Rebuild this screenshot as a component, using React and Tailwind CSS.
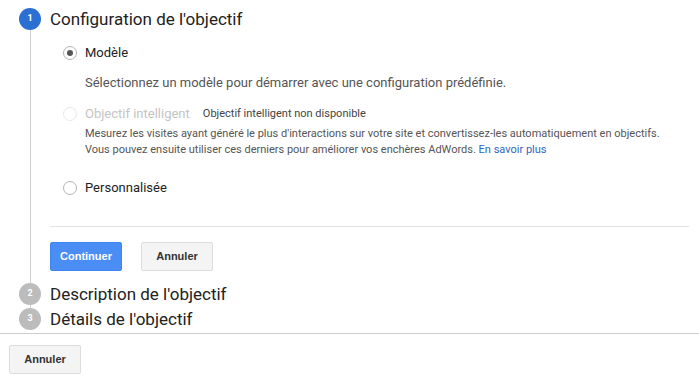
import React from 'react';

const Radio = ({ checked, disabled }) => (
    <span className={`flex h-[14px] w-[14px] shrink-0 items-center justify-center rounded-full border ${disabled ? 'border-[#e8e8e8]' : 'border-[#b5b5b5]'}`}>
        {checked && <span className="h-[6px] w-[6px] rounded-full bg-[#555]" />}
    </span>
);

const StepDot = ({ n, active }) => (
    <span className={`flex h-[22px] w-[22px] shrink-0 items-center justify-center rounded-full text-[9px] font-bold text-white ${active ? 'bg-[#2b6fd2]' : 'bg-[#bcbcbc]'}`}>{n}</span>
);

const Btn = ({ children, primary }) => (
    <button className={`h-[29px] w-[72px] rounded-[2px] border font-['Liberation_Sans',Arial,sans-serif] text-[11px] font-bold ${primary ? 'border-[#3d86f0] bg-[#4a8ef5] text-white' : 'border-[#dcdcdc] bg-[#f4f4f4] text-[#333]'}`}>{children}</button>
);

export default function App() {
    return (
        <div className="h-[380px] w-[699px] overflow-hidden bg-white font-['Roboto','Noto_Sans',sans-serif] text-[#222]">
            <div className="flex items-center pl-[19px] pt-[8px]">
                <StepDot n="1" active />
                <h2 className="ml-[9px] text-[17px] leading-[22px] text-[#222]">Configuration de l'objectif</h2>
            </div>

            <div className="ml-[30px] mr-[10px] border-l border-[#cfcfcf] pl-[19px] pt-[13px] pb-[12px]">
                <label className="ml-[13px] flex h-[20px] items-center gap-[8px] text-[13px]">
                    <Radio checked />
                    <span>Modèle</span>
                </label>
                <p className="ml-[35px] mt-[10px] text-[13px] leading-[20px] text-[#555]">Sélectionnez un modèle pour démarrer avec une configuration prédéfinie.</p>

                <label className="ml-[13px] mt-[11px] flex h-[20px] items-center gap-[8px]">
                    <Radio disabled />
                    <span className="text-[13px] text-[#c4c4c4]">Objectif intelligent</span>
                    <span className="ml-[5px] text-[11px] text-[#444]">Objectif intelligent non disponible</span>
                </label>
                <p className="ml-[35px] mt-[2px] text-[11px] leading-[16px] text-[#555]">
                    Mesurez les visites ayant généré le plus d'interactions sur votre site et convertissez-les automatiquement en objectifs.<br />
                    Vous pouvez ensuite utiliser ces derniers pour améliorer vos enchères AdWords. <a className="text-[#2f66c0]">En savoir plus</a>
                </p>

                <label className="ml-[13px] mt-[20px] flex h-[20px] items-center gap-[8px] text-[13px]">
                    <Radio />
                    <span>Personnalisée</span>
                </label>

                <div className="mt-[28px] h-px bg-[#e2e2e2]" />

                <div className="mt-[15px] flex gap-[19px]">
                    <Btn primary>Continuer</Btn>
                    <Btn>Annuler</Btn>
                </div>
            </div>

            <div className="flex items-center pl-[19px]">
                <StepDot n="2" />
                <h2 className="ml-[9px] text-[17px] leading-[22px] text-[#222]">Description de l'objectif</h2>
            </div>
            <div className="ml-[30px] h-[3px] border-l border-[#cfcfcf]" />
            <div className="flex items-center pl-[19px]">
                <StepDot n="3" />
                <h2 className="ml-[9px] text-[17px] leading-[22px] text-[#222]">Détails de l'objectif</h2>
            </div>

            <div className="mt-[3px] h-px bg-[#cccccc]" />
            <div className="pl-[9px] pt-[11px]">
                <Btn>Annuler</Btn>
            </div>
        </div>
    );
}
